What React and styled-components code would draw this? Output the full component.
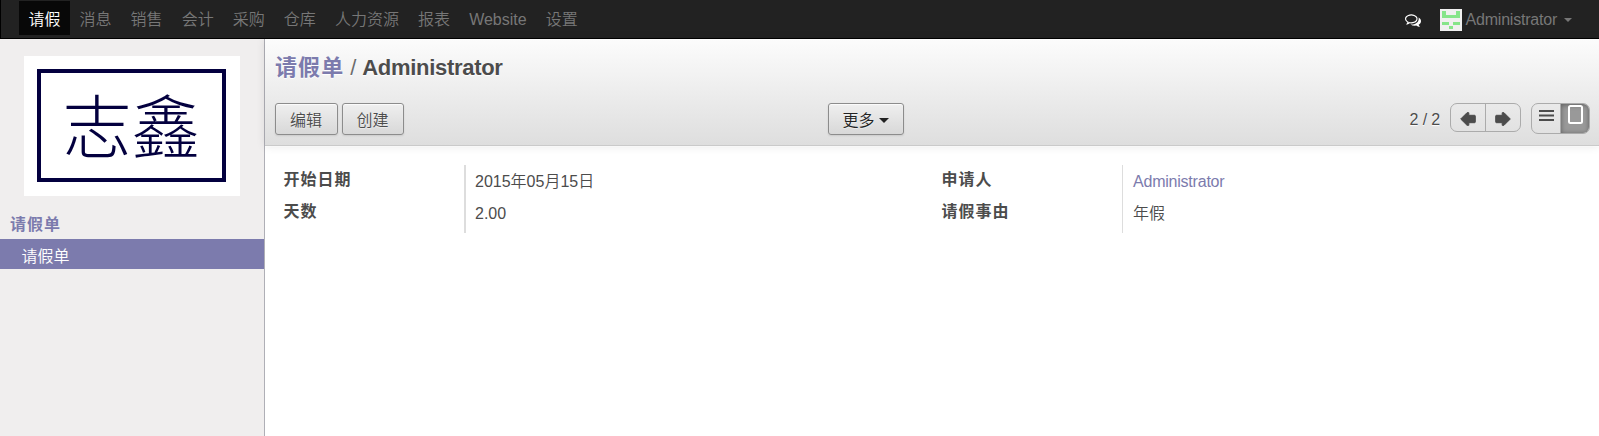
import React from "react";
import styled, { createGlobalStyle } from "styled-components";

const Global = createGlobalStyle`
  * { box-sizing: border-box; }
  body {
    margin: 0;
    background: #fff;
    color: #4c4c4c;
    font: 16px/20px "Liberation Sans", "Noto Sans CJK SC", sans-serif;
    overflow: hidden;
  }
`;

const Page = styled.div`
  height: 436px;
  display: flex;
  flex-direction: column;
`;

const TopBar = styled.nav`
  height: 39px;
  flex: none;
  display: flex;
  background: #222;
  border-bottom: 1px solid #000;
  border-left: 1px solid #000;
  padding: 1px 18px 0;
`;

const MenuItem = styled.a`
  height: 34px;
  padding: 9px 9.7px 0 9.4px;
  line-height: 20px;
  white-space: nowrap;
  font-weight: 350;
  color: ${(p) => (p.$active ? "#fff" : "#777")};
  background: ${(p) => (p.$active ? "#080808" : "transparent")};
`;

const UserArea = styled.div`
  margin-left: auto;
  display: flex;
  align-items: flex-start;
  padding: 8px 9px 0 0;
  color: #777;
`;

const ChatIcon = styled.svg`
  width: 16px;
  height: 16px;
  margin: 3px 19px 0 0;
  fill: #fff;
`;

const Avatar = styled.svg`
  width: 22px;
  height: 22px;
  margin-right: 4px;
`;

const UserName = styled.span`
  line-height: 22px;
  letter-spacing: -0.22px;
`;

const Caret = styled.i`
  margin: ${(p) => p.$margin};
  border: ${(p) => p.$size}px solid transparent;
  border-top-color: currentColor;
  border-bottom: 0;
`;

const Body = styled.div`
  flex: 1;
  display: flex;
`;

const Sidebar = styled.aside`
  width: 265px;
  flex: none;
  background: #f0eeee;
  border-right: 1px solid #afafb6;
`;

const Logo = styled.div`
  width: 216px;
  height: 140px;
  margin: 17px 0 0 24px;
  padding: 13px 14px 14px 13px;
  background: #fff;
`;

const LogoFrame = styled.div`
  height: 113px;
  border: 4px solid #03003f;
  display: flex;
  justify-content: center;
  color: #03003f;
  font: 300 69px/100px "Noto Sans CJK SC", serif;
`;

const SideHeading = styled.h4`
  height: 43px;
  margin: 0;
  padding: 19px 0 0 10px;
  font-size: 16px;
  line-height: 20px;
  letter-spacing: 1px;
  color: #7c7bad;
`;

const SideItem = styled.a`
  display: block;
  height: 30px;
  padding: 8px 0 0 21.5px;
  line-height: 20px;
  font-weight: 350;
  color: #fff;
  background: #7c7bad;
`;

const Main = styled.main`
  flex: 1;
  min-width: 0;
`;

const Header = styled.header`
  height: 107px;
  padding: 14px 9px 0 10px;
  background: linear-gradient(to bottom, #fcfcfc, #dedede);
  border-bottom: 1px solid #cacaca;
  box-shadow: 0 1px 0 rgba(255, 255, 255, 0.4), 0 0 9px rgba(0, 0, 0, 0.1);
  text-shadow: 0 1px 1px #fff;
`;

const Title = styled.h2`
  margin: 0;
  height: 50px;
  font-size: 22px;
  line-height: 30px;
  letter-spacing: -0.3px;
`;

const TitleLink = styled.a`
  color: #7c7bad;
  letter-spacing: 1.1px;
`;

const Slash = styled.span`
  font-weight: 400;
  color: #6c6c6c;
  margin-right: 0.5px;
`;

const Toolbar = styled.div`
  display: grid;
  grid-template-columns: 553px 1fr auto;
  align-items: start;
`;

const ButtonRow = styled.div`
  display: flex;
  gap: 4px;
`;

const Button = styled.button`
  height: 32px;
  width: ${(p) => p.$width}px;
  display: flex;
  align-items: center;
  justify-content: center;
  padding: 4px 1px 0 0;
  border: 1px solid #8c8c8c;
  border-radius: 3px;
  background: linear-gradient(to bottom, #efefef, #d8d8d8);
  box-shadow: 0 1px 2px rgba(0, 0, 0, 0.1), inset 0 1px 1px rgba(255, 255, 255, 0.8);
  font: 350 16px/20px "Liberation Sans", "Noto Sans CJK SC", sans-serif;
  text-shadow: 0 1px 1px rgba(255, 255, 255, 0.5);
  color: ${(p) => p.$color || "#4c4c4c"};
`;

const PagerArea = styled.div`
  display: flex;
  align-items: flex-start;
`;

const PagerText = styled.span`
  margin-right: 10px;
  line-height: 33px;
  letter-spacing: -0.15px;
`;

const Group = styled.div`
  display: flex;
  height: ${(p) => p.$height}px;
  margin-right: ${(p) => p.$gap || 0}px;
  border: 1px solid #ababab;
  border-radius: 7px;
  overflow: hidden;
`;

const GroupButton = styled.span`
  width: ${(p) => p.$width}px;
  display: flex;
  justify-content: center;
  padding-top: ${(p) => p.$top}px;
  border-left: ${(p) => (p.$divided ? "1px solid #ababab" : "0")};
  background: ${(p) => (p.$selected ? "#999" : "transparent")};
  box-shadow: ${(p) => (p.$selected ? "inset 0 1px 5px rgba(0,0,0,.4)" : "none")};
`;

const Form = styled.section`
  display: grid;
  grid-template-columns: 658px 1fr;
  padding: 19px 10px 0;
`;

const FieldGroup = styled.div`
  display: grid;
  grid-template-columns: ${(p) => p.$label}px 1fr;
`;

const Labels = styled.div`
  padding: 1px 0 0 8.5px;
  font-weight: 700;
  letter-spacing: 1px;
`;

const Values = styled.div`
  height: 68px;
  border-left: ${(p) => p.$line}px solid #ddd;
  padding: 3px 0 0 ${(p) => 11 - p.$line}px;
  font-weight: 350;
`;

const Field = styled.div`
  height: 32px;
  line-height: 28px;
  color: ${(p) => (p.$link ? "#7c7bad" : "inherit")};
  letter-spacing: ${(p) => (p.$link ? "-0.22px" : "inherit")};
`;

const menus = ["请假", "消息", "销售", "会计", "采购", "仓库", "人力资源", "报表", "Website", "设置"];

const Arrow = ({ flip }) => (
  <svg width="16" height="14" viewBox="0 0 16 14">
    <path
      d="M0.7 7 7 .7H8.8V3.3H14.5Q15.3 3.3 15.3 4.1V9.9Q15.3 10.7 14.5 10.7H8.8V13.3H7Z"
      fill="#4c4c4c"
      stroke="#4c4c4c"
      strokeLinejoin="round"
      transform={flip ? "translate(16 0) scale(-1 1)" : undefined}
    />
  </svg>
);

export default function App() {
  return (
    <Page>
      <Global />
      <TopBar>
        {menus.map((m, i) => (
          <MenuItem key={m} $active={i === 0}>{m}</MenuItem>
        ))}
        <UserArea>
          <ChatIcon viewBox="0 0 1792 1792">
            <path d="M704 384q-153 0-286 52t-211.5 141-78.5 191q0 82 53 158t149 132l97 56-35 84q34-20 62-39l44-31 53 10q78 14 153 14 153 0 286-52t211.5-141 78.5-191-78.5-191-211.5-141-286-52zm0-128q191 0 353.5 68.5t256.5 186.5 94 257-94 257-256.5 186.5-353.5 68.5q-86 0-176-16-124 88-278 128-36 9-86 16h-3q-11 0-20.5-8t-11.5-21q-1-3-1-6.5t.5-6.5 2-6l2.5-5 3.5-5.5 4-5 4.5-5 4-4.5q5-6 23-25t26-29.5 22.5-29 25-38.5 20.5-44q-124-72-195-177t-71-224q0-139 94-257t256.5-186.5 353.5-68.5zm822 1169q10 24 20.5 44t25 38.5 22.5 29 26 29.5 23 25q1 1 4 4.5t4.5 5 4 5 3.5 5.5l2.5 5 2 6 .5 6.5-1 6.5q-3 14-13 22t-22 7q-50-7-86-16-154-40-278-128-90 16-176 16-271 0-472-132 58 4 88 4 161 0 309-45t264-129q125-92 192-212t67-254q0-77-23-152 129 71 204 178t75 230q0 120-71 224.5t-195 176.5z" />
          </ChatIcon>
          <Avatar viewBox="0 0 22 22">
            <path fill="#f0f0f0" d="M0 0h22v22H0z" />
            <path fill="#86e58a" d="M2 2h4v4h10V2h4v7H2zM2 13h7v3H2zM13 13h7v3h-7zM9 17h4v3H9z" />
          </Avatar>
          <UserName>Administrator</UserName>
          <Caret $size={4} $margin="9px 0 0 7px" />
        </UserArea>
      </TopBar>
      <Body>
        <Sidebar>
          <Logo>
            <LogoFrame>志鑫</LogoFrame>
          </Logo>
          <SideHeading>请假单</SideHeading>
          <SideItem>请假单</SideItem>
        </Sidebar>
        <Main>
          <Header>
            <Title>
              <TitleLink>请假单</TitleLink> <Slash>/</Slash> Administrator
            </Title>
            <Toolbar>
              <ButtonRow>
                <Button $width={63}>编辑</Button>
                <Button $width={62}>创建</Button>
              </ButtonRow>
              <Button $width={76} $color="#222">
                更多
                <Caret $size={5} $margin="0 0 2px 4px" />
              </Button>
              <PagerArea>
                <PagerText>2 / 2</PagerText>
                <Group $height={29} $gap={10}>
                  <GroupButton $width={34} $top={8}><Arrow /></GroupButton>
                  <GroupButton $width={35} $top={8} $divided><Arrow flip /></GroupButton>
                </Group>
                <Group $height={31}>
                  <GroupButton $width={28} $top={6}>
                    <svg width="15" height="12" viewBox="0 0 15 12">
                      <path d="M0 1h15M0 5.5h15M0 10h15" stroke="#4c4c4c" strokeWidth="2" />
                    </svg>
                  </GroupButton>
                  <GroupButton $width={29} $top={1} $divided $selected>
                    <svg width="15" height="19" viewBox="0 0 15 19">
                      <rect x="1" y="1" width="13" height="17" rx="1.5" fill="none" stroke="#fff" strokeWidth="2" />
                    </svg>
                  </GroupButton>
                </Group>
              </PagerArea>
            </Toolbar>
          </Header>
          <Form>
            <FieldGroup $label={189}>
              <Labels>
                <Field>开始日期</Field>
                <Field>天数</Field>
              </Labels>
              <Values $line={2}>
                <Field>2015年05月15日</Field>
                <Field>2.00</Field>
              </Values>
            </FieldGroup>
            <FieldGroup $label={189}>
              <Labels>
                <Field>申请人</Field>
                <Field>请假事由</Field>
              </Labels>
              <Values $line={1}>
                <Field $link>Administrator</Field>
                <Field>年假</Field>
              </Values>
            </FieldGroup>
          </Form>
        </Main>
      </Body>
    </Page>
  );
}
